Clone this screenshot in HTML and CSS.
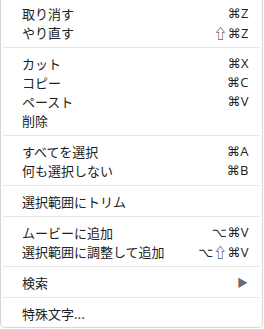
FILE: index.html
```html
<!DOCTYPE html>
<html lang="ja">
<head>
  <meta charset="UTF-8" />
  <meta name="viewport" content="width=device-width, initial-scale=1.0" />
  <title>編集メニュー</title>
  <link rel="stylesheet" href="styles.css">
</head>
<body>
  <div class="menu">
    <div class="item"><span class="label">取り消す</span><span class="key">⌘Z</span></div>
    <div class="item"><span class="label">やり直す</span><span class="key"><span class="sym">⇧</span>⌘Z</span></div>
    <div class="sep"></div>
    <div class="item"><span class="label">カット</span><span class="key">⌘X</span></div>
    <div class="item"><span class="label">コピー</span><span class="key">⌘C</span></div>
    <div class="item"><span class="label">ペースト</span><span class="key">⌘V</span></div>
    <div class="item"><span class="label">削除</span></div>
    <div class="sep"></div>
    <div class="item"><span class="label">すべてを選択</span><span class="key">⌘A</span></div>
    <div class="item"><span class="label">何も選択しない</span><span class="key">⌘B</span></div>
    <div class="sep"></div>
    <div class="item"><span class="label">選択範囲にトリム</span></div>
    <div class="sep"></div>
    <div class="item"><span class="label">ムービーに追加</span><span class="key">⌥⌘V</span></div>
    <div class="item"><span class="label">選択範囲に調整して追加</span><span class="key">⌥<span class="sym">⇧</span>⌘V</span></div>
    <div class="sep"></div>
    <div class="item"><span class="label">検索</span><span class="arrow">▶</span></div>
    <div class="sep"></div>
    <div class="item"><span class="label">特殊文字...</span></div>
  </div>
</body>
</html>
```

FILE: styles.css
```css
body {
  margin: 0;
  background-color: #fff;
  font-family: "Noto Sans CJK JP", "Noto Sans", sans-serif;
  font-size: 13px;
  color: #222;
}
.menu {
  width: 263px;
  height: 328px;
  box-sizing: border-box;
  border: 1px solid #d6d6d6;
  border-top: none;
  border-radius: 0 0 5px 5px;
  background-color: #fff;
  padding-top: 4px;
}
.item {
  display: flex;
  align-items: center;
  justify-content: space-between;
  height: 19px;
  padding: 0 13px 0 21px;
  line-height: 19px;
}
.key {
  font-family: "Open Sans", "DejaVu Sans", sans-serif;
  font-size: 13px;
  letter-spacing: 0.5px;
}
.sym {
  font-family: "Noto Sans CJK JP", "DejaVu Sans", sans-serif;
  font-size: 13px;
}
.arrow {
  font-size: 11px;
  color: #6c6c6c;
  margin-right: 1px;
}
.sep {
  height: 1px;
  background-color: #e6e6e6;
  margin: 5px 2px 6px 2px;
}
```
